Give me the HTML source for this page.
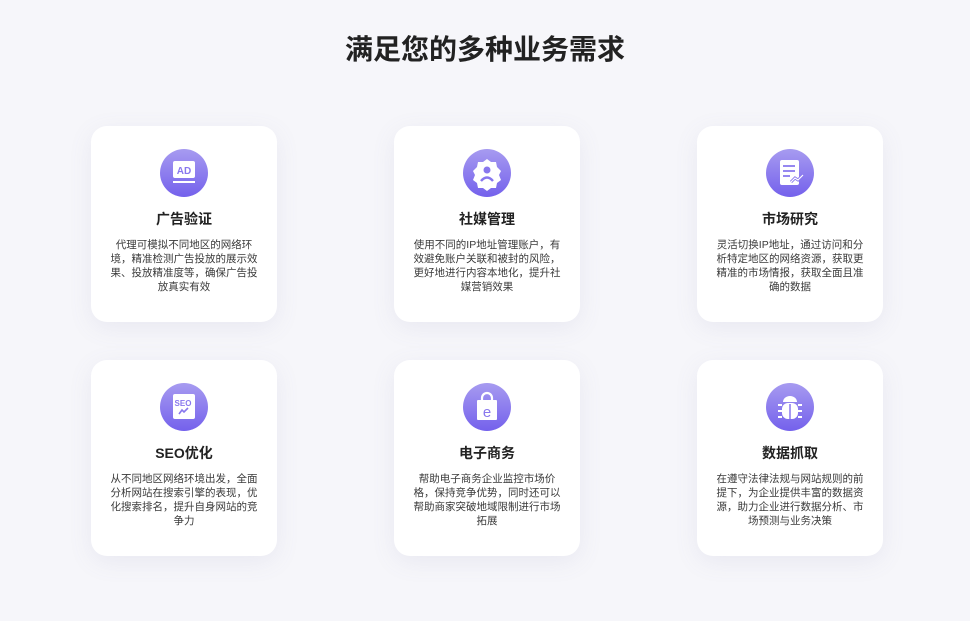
<!DOCTYPE html>
<html><head><meta charset="utf-8"><style>
body{margin:0;width:970px;height:621px;background:#f6f6fa;font-family:"Liberation Sans","Noto Sans CJK SC",sans-serif;position:relative;overflow:hidden}
h1{position:absolute;top:30px;left:0;width:970px;text-align:center;margin:0;font-size:28px;font-weight:700;color:#222;line-height:40px}
.card{position:absolute;width:186px;height:196px;background:#fff;border-radius:16px;box-shadow:0 6px 24px rgba(120,120,170,0.10);text-align:center}
.ic{position:absolute;left:69px;top:23px;width:48px;height:48px;border-radius:50%;background:linear-gradient(#a79bf0,#7461ec)}
.ic svg{position:absolute;left:0;top:0}
.t{position:absolute;top:83px;left:0;width:100%;font-size:14px;font-weight:700;color:#222;line-height:20px}
.d{position:absolute;top:112px;left:18px;width:150px;font-size:10.5px;color:#3a3a3a;line-height:14px}
</style></head><body>
<h1>满足您的多种业务需求</h1>

<div class="card" style="left:91px;top:126px"><div class="ic"><svg width="48" height="48"><rect x="13" y="12" width="22" height="17" rx="2" fill="#fff"/><text x="24" y="25" text-anchor="middle" font-size="10" font-weight="700" fill="#8877ee" font-family="Liberation Sans">AD</text><rect x="13" y="32" width="22" height="2" fill="#fff"/></svg></div><div class="t">广告验证</div><div class="d">代理可模拟不同地区的网络环境，精准检测广告投放的展示效果、投放精准度等，确保广告投放真实有效</div></div>

<div class="card" style="left:394px;top:126px"><div class="ic"><svg width="48" height="48"><path d="M24 10l4 3 5 0 1 5 4 4-2 4 2 5-4 3-1 5-5 0-4 3-4-3-5 0-1-5-4-3 2-5-2-4 4-4 1-5 5 0z" fill="#fff"/><circle cx="24" cy="21" r="3.5" fill="#8877ee"/><path d="M18 32q6-7 12 0" stroke="#8877ee" stroke-width="2.4" fill="none"/></svg></div><div class="t">社媒管理</div><div class="d">使用不同的IP地址管理账户，有效避免账户关联和被封的风险，更好地进行内容本地化，提升社媒营销效果</div></div>

<div class="card" style="left:697px;top:126px"><div class="ic"><svg width="48" height="48"><rect x="14" y="11" width="19" height="25" rx="2" fill="#fff"/><path d="M17 17h12M17 22h12M17 27h7" stroke="#8877ee" stroke-width="1.8"/><path d="M25 33l4-4 3 2 5-5" stroke="#8877ee" stroke-width="3" fill="none"/><path d="M25 33l4-4 3 2 5-5" stroke="#fff" stroke-width="1.2" fill="none"/></svg></div><div class="t">市场研究</div><div class="d">灵活切换IP地址，通过访问和分析特定地区的网络资源，获取更精准的市场情报，获取全面且准确的数据</div></div>

<div class="card" style="left:91px;top:360px"><div class="ic"><svg width="48" height="48"><rect x="13" y="11" width="22" height="25" rx="2" fill="#fff"/><text x="23" y="23" text-anchor="middle" font-size="8" font-weight="700" fill="#8877ee" font-family="Liberation Sans">SEO</text><path d="M19 31l3-4 2 2 4-4" stroke="#8877ee" stroke-width="1.6" fill="none"/></svg></div><div class="t">SEO优化</div><div class="d">从不同地区网络环境出发，全面分析网站在搜索引擎的表现，优化搜索排名，提升自身网站的竞争力</div></div>

<div class="card" style="left:394px;top:360px"><div class="ic"><svg width="48" height="48"><path d="M19 17v-2a5 5 0 0110 0v2" stroke="#fff" stroke-width="2.2" fill="none"/><rect x="14" y="17" width="20" height="20" rx="1" fill="#fff"/><text x="24" y="34" text-anchor="middle" font-size="15" fill="#8877ee" font-family="Liberation Sans">e</text></svg></div><div class="t">电子商务</div><div class="d">帮助电子商务企业监控市场价格，保持竞争优势，同时还可以帮助商家突破地域限制进行市场拓展</div></div>

<div class="card" style="left:697px;top:360px"><div class="ic"><svg width="48" height="48"><path d="M17 19a7 6 0 0114 0z" fill="#fff"/><rect x="16" y="20" width="16" height="16" rx="6" fill="#fff"/><path d="M24 21v15" stroke="#8877ee" stroke-width="1.5"/><path d="M12 22h4M32 22h4M12 28h4M32 28h4M12 34h4M32 34h4" stroke="#fff" stroke-width="2"/></svg></div><div class="t">数据抓取</div><div class="d">在遵守法律法规与网站规则的前提下，为企业提供丰富的数据资源，助力企业进行数据分析、市场预测与业务决策</div></div>
</body></html>
